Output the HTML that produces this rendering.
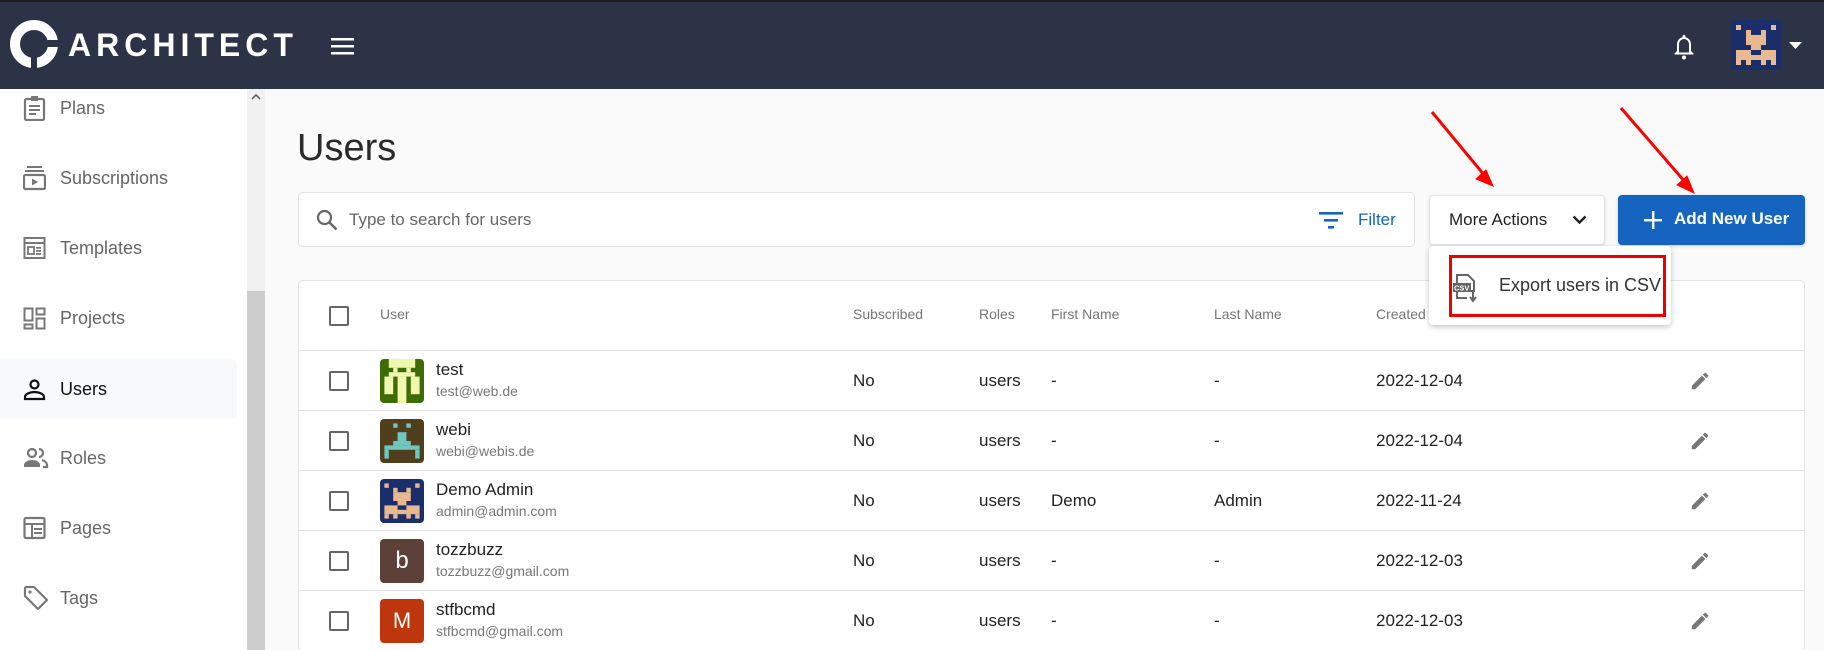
<!DOCTYPE html>
<html style="overflow:hidden"><head><meta charset="utf-8"><style>
*{box-sizing:border-box;margin:0;padding:0}
html,body{width:1824px;height:650px;overflow:hidden}
body{font-family:"Liberation Sans",sans-serif;background:#fafafa;position:relative}
.abs{position:absolute}
.hdr{left:0;top:0;width:1824px;height:89px;background:#2c3346;border-top:2px solid #1e1e1e}
.logo-t{left:68px;top:27px;color:#fff;font-size:32px;letter-spacing:5px;font-weight:bold}
.side{left:0;top:89px;width:247px;height:561px;background:#fff}
.nav{position:absolute;left:0;width:237px;height:60px;display:flex;align-items:center;font-size:18px;color:#666}
.nav svg{position:absolute;left:23px}
.nav span{position:absolute;left:60px}
.nav.act{background:#f7f9fc;border-radius:0 5px 5px 0;color:#111}
.sb{left:247px;top:89px;width:18px;height:561px;background:#f1f1f1}
.thumb{left:247px;top:291px;width:18px;height:359px;background:#cdcdcd}
.title{left:297px;top:127px;font-size:38px;font-weight:300;color:#2a2a2a}
.card{background:#fff;border:1px solid #e3e3e3;border-radius:5px}
.search{left:298px;top:192px;width:1117px;height:55px}
.btn{border-radius:4px}
.th{position:absolute;top:306px;font-size:14px;color:#757575}
.row{position:absolute;left:299px;width:1505px;height:60px;border-top:1px solid #e3e3e3}
.cb{position:absolute;left:30px;width:20px;height:20px;border:2px solid #666;border-radius:2px}
.cell{position:absolute;font-size:17px;color:#222}
.av{position:absolute;left:81px;top:8px;width:44px;height:44px;border-radius:4px;overflow:hidden}
.nm{position:absolute;left:137px;top:9px;font-size:17px;color:#222}
.em{position:absolute;left:137px;top:32px;font-size:14px;color:#777}
</style></head><body>
<div class="abs hdr"></div>
<svg class="abs" style="left:8px;top:18px" width="54" height="56" viewBox="0 0 54 56">
<circle cx="26" cy="26" r="19" fill="none" stroke="#fff" stroke-width="10"/>
<rect x="32" y="22" width="22" height="7" fill="#2c3346"/>
<rect x="23" y="36" width="6" height="20" fill="#2c3346"/>
</svg>
<div class="abs logo-t">ARCHITECT</div>
<svg class="abs" style="left:331px;top:37px" width="23" height="18"><rect y="1" width="23" height="2.5" fill="#fff"/><rect y="8" width="23" height="2.5" fill="#fff"/><rect y="15" width="23" height="2.5" fill="#fff"/></svg>
<svg class="abs" style="left:1672px;top:32px" width="24" height="28" viewBox="0 0 24 28"><path d="M12 3a1.5 1.5 0 0 1 1.5 1.5v.7A7 7 0 0 1 19 12v7l2.5 2.5v1H2.5v-1L5 19v-7a7 7 0 0 1 5.5-6.8v-.7A1.5 1.5 0 0 1 12 3zM7 20.5h10V12a5 5 0 0 0-10 0z" fill="#fff"/><circle cx="12" cy="25.5" r="2" fill="#fff"/></svg>
<svg class="abs" style="left:1731px;top:20px" width="50" height="50" viewBox="0 0 10 10"><rect width="10" height="10" rx="0.6" fill="#1a2e6b"/><g fill="#e8b890"><rect x="1" y="1" width="1" height="1"/><rect x="8" y="1" width="1" height="1"/><rect x="3" y="2" width="1" height="1"/><rect x="6" y="2" width="1" height="1"/><rect x="3" y="3" width="4" height="2"/><rect x="4" y="5" width="2" height="1"/><rect x="1" y="6" width="3" height="2"/><rect x="6" y="6" width="3" height="2"/><rect x="4" y="7" width="2" height="1"/><rect x="1" y="8" width="1" height="1"/><rect x="3" y="8" width="1" height="1"/><rect x="6" y="8" width="1" height="1"/><rect x="8" y="8" width="1" height="1"/></g></svg>
<svg class="abs" style="left:1789px;top:42px" width="13" height="7"><path d="M0 0h13L6.5 7z" fill="#fff"/></svg>

<div class="abs side">
<div class="nav" style="top:-11px"><svg width="23" height="26" viewBox="0 0 23 26"><rect x="2" y="4" width="19" height="21" rx="1.5" fill="none" stroke="#777" stroke-width="2.2"/><rect x="8" y="1" width="7" height="5" fill="#777"/><rect x="6" y="10" width="11" height="2" fill="#777"/><rect x="6" y="14" width="11" height="2" fill="#777"/><rect x="6" y="18" width="7" height="2" fill="#777"/></svg><span>Plans</span></div>
<div class="nav" style="top:59px"><svg width="23" height="26" viewBox="0 0 23 26"><rect x="4" y="1" width="15" height="2" fill="#777"/><rect x="2" y="5" width="19" height="2" fill="#777"/><rect x="1" y="10" width="21" height="14" rx="1.5" fill="none" stroke="#777" stroke-width="2.2"/><path d="M9 13.5v7l6-3.5z" fill="#777"/></svg><span>Subscriptions</span></div>
<div class="nav" style="top:129px"><svg width="23" height="24" viewBox="0 0 23 24"><rect x="1.5" y="2" width="20" height="20" fill="none" stroke="#777" stroke-width="2"/><rect x="1.5" y="6" width="20" height="2" fill="#777"/><rect x="5" y="11" width="6" height="7" fill="none" stroke="#777" stroke-width="1.8"/><rect x="13" y="11" width="5" height="1.8" fill="#777"/><rect x="13" y="14" width="5" height="1.8" fill="#777"/><rect x="13" y="17" width="5" height="1.8" fill="#777"/></svg><span>Templates</span></div>
<div class="nav" style="top:199px"><svg width="23" height="23" viewBox="0 0 23 23"><g fill="none" stroke="#777" stroke-width="2"><rect x="1.5" y="1.5" width="8" height="12"/><rect x="13.5" y="1.5" width="8" height="6"/><rect x="13.5" y="11.5" width="8" height="10"/><rect x="1.5" y="17.5" width="8" height="4"/></g></svg><span>Projects</span></div>
<div class="nav act" style="top:270px"><svg width="23" height="23" viewBox="0 0 23 23"><circle cx="11.5" cy="6.5" r="4" fill="none" stroke="#111" stroke-width="2.2"/><path d="M2 21v-2c0-3 5-5 9.5-5s9.5 2 9.5 5v2z" fill="none" stroke="#111" stroke-width="2.2"/></svg><span>Users</span></div>
<div class="nav" style="top:339px"><svg width="26" height="22" viewBox="0 0 26 22"><circle cx="9" cy="6" r="4" fill="none" stroke="#777" stroke-width="2.2"/><path d="M1 20v-2c0-3 4-5 8-5s8 2 8 5v2z" fill="#777"/><path d="M16 2a4 4 0 0 1 0 8M19 13c3 1 5 3 5 5v2h-4" fill="none" stroke="#777" stroke-width="2.2"/></svg><span>Roles</span></div>
<div class="nav" style="top:409px"><svg width="23" height="24" viewBox="0 0 23 24"><rect x="1.5" y="2" width="20" height="20" rx="1.5" fill="none" stroke="#777" stroke-width="2.2"/><rect x="1.5" y="7" width="20" height="2" fill="#777"/><rect x="8" y="9" width="2" height="13" fill="#777"/><rect x="11" y="12" width="8" height="2" fill="#777"/><rect x="11" y="16" width="8" height="2" fill="#777"/></svg><span>Pages</span></div>
<div class="nav" style="top:479px"><svg width="26" height="26" viewBox="0 0 26 26"><path d="M2 3v8l13 13 9-9L11 2H3z" fill="none" stroke="#777" stroke-width="2.2" stroke-linejoin="round"/><circle cx="7" cy="7" r="1.6" fill="#777"/></svg><span>Tags</span></div>
</div>
<div class="abs sb"></div><div class="abs thumb"></div>
<svg class="abs" style="left:251px;top:94px" width="10" height="6"><path d="M1 5l4-4 4 4" fill="none" stroke="#555" stroke-width="1.5"/></svg>

<div class="abs title">Users</div>
<div class="abs card search">
<svg class="abs" style="left:17px;top:16px" width="22" height="22" viewBox="0 0 22 22"><circle cx="8.5" cy="8.5" r="6.5" fill="none" stroke="#666" stroke-width="2.2"/><path d="M13.5 13.5l7 7" stroke="#666" stroke-width="2.5"/></svg>
<div class="abs" style="left:50px;top:17px;font-size:17px;color:#666">Type to search for users</div>
<svg class="abs" style="left:1020px;top:18px" width="24" height="18"><rect y="1" width="24" height="2.6" fill="#1565c0"/><rect x="5" y="8" width="14" height="2.6" fill="#1565c0"/><rect x="9" y="15" width="6" height="2.6" fill="#1565c0"/></svg>
<div class="abs" style="left:1059px;top:17px;font-size:17px;color:#1565c0">Filter</div>
</div>
<div class="abs card btn" style="left:1429px;top:195px;width:176px;height:50px;box-shadow:0 1px 3px rgba(0,0,0,.12)">
<div class="abs" style="left:19px;top:14px;font-size:17px;color:#222">More Actions</div>
<svg class="abs" style="left:142px;top:19px" width="15" height="10"><path d="M1.5 1.5l6 6 6-6" fill="none" stroke="#222" stroke-width="2.4"/></svg>
</div>
<div class="abs btn" style="left:1618px;top:195px;width:187px;height:50px;background:#1565c0;box-shadow:0 1px 3px rgba(0,0,0,.2)">
<svg class="abs" style="left:26px;top:16px" width="18" height="18"><rect x="8" y="0" width="2.4" height="18" fill="#fff"/><rect x="0" y="8" width="18" height="2.4" fill="#fff"/></svg>
<div class="abs" style="left:56px;top:14px;font-size:17px;color:#fff;font-weight:bold">Add New User</div>
</div>

<div class="abs card" style="left:298px;top:280px;width:1507px;height:372px"></div>
<div class="abs" style="left:329px;top:306px;width:20px;height:20px;border:2px solid #666;border-radius:2px"></div>
<div class="th" style="left:380px">User</div>
<div class="th" style="left:853px">Subscribed</div>
<div class="th" style="left:979px">Roles</div>
<div class="th" style="left:1051px">First Name</div>
<div class="th" style="left:1214px">Last Name</div>
<div class="th" style="left:1376px">Created</div>

<div class="row" style="top:350px"><div class="cb" style="top:20px"></div>
<svg class="av" viewBox="0 0 10 10"><rect width="10" height="10" fill="#3e6b04"/><g fill="#f0f8b0"><rect x="2" y="0" width="6" height="2"/><rect x="3" y="2" width="1" height="1"/><rect x="6" y="2" width="1" height="1"/><rect x="2" y="3" width="6" height="1"/><rect x="1" y="4" width="2" height="4"/><rect x="7" y="4" width="2" height="4"/><rect x="4" y="4" width="2" height="6"/></g></svg>
<div class="nm">test</div><div class="em">test@web.de</div>
<div class="cell" style="left:554px;top:20px">No</div><div class="cell" style="left:680px;top:20px">users</div><div class="cell" style="left:752px;top:20px">-</div><div class="cell" style="left:915px;top:20px">-</div><div class="cell" style="left:1077px;top:20px">2022-12-04</div>
<svg class="abs" style="left:1390px;top:19px" width="22" height="22" viewBox="0 0 24 24"><path d="M3 17.25V21h3.75L17.81 9.94l-3.75-3.75zM20.71 7.04a1 1 0 0 0 0-1.41l-2.34-2.34a1 1 0 0 0-1.41 0l-1.830 1.83 3.75 3.75z" fill="#777"/></svg></div>

<div class="row" style="top:410px"><div class="cb" style="top:20px"></div>
<svg class="av" viewBox="0 0 10 10"><rect width="10" height="10" fill="#4f3f1c"/><g fill="#6fc7bf"><rect x="3" y="1" width="1" height="1"/><rect x="6" y="1" width="1" height="1"/><rect x="4" y="3" width="2" height="2"/><rect x="3" y="5" width="4" height="1"/><rect x="1" y="6" width="8" height="1"/><rect x="1" y="7" width="1" height="2"/><rect x="8" y="7" width="1" height="2"/></g></svg>
<div class="nm">webi</div><div class="em">webi@webis.de</div>
<div class="cell" style="left:554px;top:20px">No</div><div class="cell" style="left:680px;top:20px">users</div><div class="cell" style="left:752px;top:20px">-</div><div class="cell" style="left:915px;top:20px">-</div><div class="cell" style="left:1077px;top:20px">2022-12-04</div>
<svg class="abs" style="left:1390px;top:19px" width="22" height="22" viewBox="0 0 24 24"><path d="M3 17.25V21h3.75L17.81 9.94l-3.75-3.75zM20.71 7.04a1 1 0 0 0 0-1.41l-2.34-2.34a1 1 0 0 0-1.41 0l-1.83 1.83 3.75 3.75z" fill="#777"/></svg></div>

<div class="row" style="top:470px"><div class="cb" style="top:20px"></div>
<svg class="av" viewBox="0 0 10 10"><rect width="10" height="10" fill="#1a2e6b"/><g fill="#e8b890"><rect x="1" y="1" width="1" height="1"/><rect x="8" y="1" width="1" height="1"/><rect x="3" y="2" width="1" height="1"/><rect x="6" y="2" width="1" height="1"/><rect x="3" y="3" width="4" height="2"/><rect x="4" y="5" width="2" height="1"/><rect x="1" y="6" width="3" height="2"/><rect x="6" y="6" width="3" height="2"/><rect x="4" y="7" width="2" height="1"/><rect x="1" y="8" width="1" height="1"/><rect x="3" y="8" width="1" height="1"/><rect x="6" y="8" width="1" height="1"/><rect x="8" y="8" width="1" height="1"/></g></svg>
<div class="nm">Demo Admin</div><div class="em">admin@admin.com</div>
<div class="cell" style="left:554px;top:20px">No</div><div class="cell" style="left:680px;top:20px">users</div><div class="cell" style="left:752px;top:20px">Demo</div><div class="cell" style="left:915px;top:20px">Admin</div><div class="cell" style="left:1077px;top:20px">2022-11-24</div>
<svg class="abs" style="left:1390px;top:19px" width="22" height="22" viewBox="0 0 24 24"><path d="M3 17.25V21h3.75L17.81 9.940l-3.75-3.75zM20.71 7.04a1 1 0 0 0 0-1.41l-2.34-2.34a1 1 0 0 0-1.41 0l-1.83 1.83 3.75 3.75z" fill="#777"/></svg></div>

<div class="row" style="top:530px"><div class="cb" style="top:20px"></div>
<div class="av" style="background:#5d4037;color:#fff;font-size:24px;text-align:center;line-height:44px">b</div>
<div class="nm">tozzbuzz</div><div class="em">tozzbuzz@gmail.com</div>
<div class="cell" style="left:554px;top:20px">No</div><div class="cell" style="left:680px;top:20px">users</div><div class="cell" style="left:752px;top:20px">-</div><div class="cell" style="left:915px;top:20px">-</div><div class="cell" style="left:1077px;top:20px">2022-12-03</div>
<svg class="abs" style="left:1390px;top:19px" width="22" height="22" viewBox="0 0 24 24"><path d="M3 17.25V21h3.75L17.81 9.94l-3.75-3.75zM20.71 7.04a1 1 0 0 0 0-1.41l-2.34-2.34a1 1 0 0 0-1.41 0l-1.83 1.83 3.75 3.75z" fill="#777"/></svg></div>

<div class="row" style="top:590px"><div class="cb" style="top:20px"></div>
<div class="av" style="background:#bf360c;color:#fff;font-size:22px;text-align:center;line-height:44px">M</div>
<div class="nm">stfbcmd</div><div class="em">stfbcmd@gmail.com</div>
<div class="cell" style="left:554px;top:20px">No</div><div class="cell" style="left:680px;top:20px">users</div><div class="cell" style="left:752px;top:20px">-</div><div class="cell" style="left:915px;top:20px">-</div><div class="cell" style="left:1077px;top:20px">2022-12-03</div>
<svg class="abs" style="left:1390px;top:19px" width="22" height="22" viewBox="0 0 24 24"><path d="M3 17.25V21h3.75L17.81 9.94l-3.75-3.75zM20.71 7.04a1 1 0 0 0 0-1.41l-2.34-2.34a1 1 0 0 0-1.41 0l-1.83 1.83 3.75 3.75z" fill="#777"/></svg></div>

<div class="abs" style="left:1429px;top:246px;width:242px;height:79px;background:#fff;border-radius:4px;box-shadow:0 2px 6px rgba(0,0,0,.22)"></div>
<div class="abs" style="left:1449px;top:255px;width:217px;height:62px;border:3px solid #e00"></div>
<svg class="abs" style="left:1453px;top:274px" width="26" height="29" viewBox="0 0 26 29"><path d="M4 1h11l6 6v10H4z" fill="none" stroke="#666" stroke-width="2"/><rect x="0" y="9" width="18" height="9" fill="#666"/><text x="1" y="16.5" font-size="7.5" fill="#fff" font-family="Liberation Sans" font-weight="bold">CSV</text><path d="M4 18v6h10" fill="none" stroke="#666" stroke-width="2"/><path d="M20 17v9M17 23l3 4 3-4" fill="none" stroke="#666" stroke-width="2"/></svg>
<div class="abs" style="left:1499px;top:275px;font-size:18px;color:#333">Export users in CSV</div>

<svg class="abs" style="left:0;top:0" width="1824" height="650">
<g stroke="#f00" stroke-width="3" fill="#f00">
<line x1="1432" y1="112" x2="1485" y2="176"/><path d="M1493 186l-17-7 10-9z" stroke-width="1"/>
<line x1="1621" y1="108" x2="1686" y2="183"/><path d="M1694 193l-17-8 10-9z" stroke-width="1"/>
</g></svg>
</body></html>
